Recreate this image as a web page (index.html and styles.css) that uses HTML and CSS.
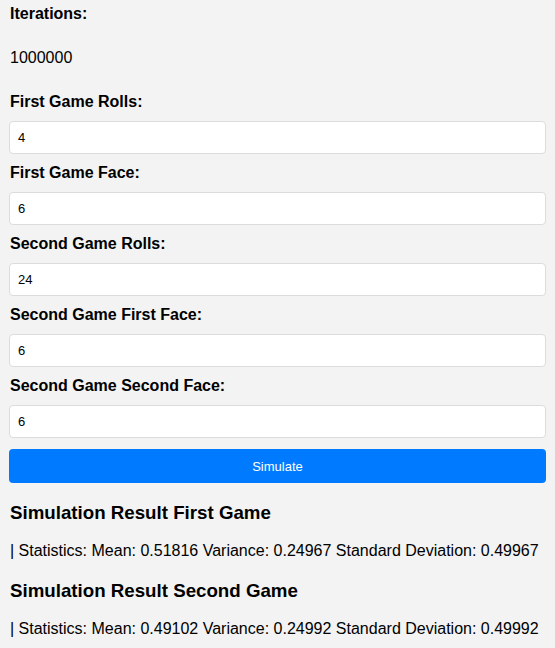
FILE: index.html
```html
<!DOCTYPE html>
<html lang="en">
<head>
<meta charset="utf-8">
<title>Dice Simulation</title>
<link rel="stylesheet" href="styles.css">
</head>
<body>
<div class="app">
  <form class="sim-form">
    <label class="field-label">Iterations:</label>
    <p class="iter-value">1000000</p>
    <label class="field-label" for="r1">First Game Rolls:</label>
    <input class="field-input" id="r1" type="text" value="4">
    <label class="field-label" for="f1">First Game Face:</label>
    <input class="field-input" id="f1" type="text" value="6">
    <label class="field-label" for="r2">Second Game Rolls:</label>
    <input class="field-input" id="r2" type="text" value="24">
    <label class="field-label" for="f2a">Second Game First Face:</label>
    <input class="field-input" id="f2a" type="text" value="6">
    <label class="field-label" for="f2b">Second Game Second Face:</label>
    <input class="field-input" id="f2b" type="text" value="6">
    <button class="sim-button" type="button">Simulate</button>
  </form>
  <div class="results">
    <h3 class="result-title">Simulation Result First Game</h3>
    <p class="result-stats">| Statistics: Mean: 0.51816 Variance: 0.24967 Standard Deviation: 0.49967</p>
    <h3 class="result-title">Simulation Result Second Game</h3>
    <p class="result-stats">| Statistics: Mean: 0.49102 Variance: 0.24992 Standard Deviation: 0.49992</p>
  </div>
</div>
</body>
</html>
```

FILE: styles.css
```css
html, body {
  margin: 0;
  padding: 0;
  background: #f3f3f3;
}

body {
  font-family: "Liberation Sans", Arial, sans-serif;
  color: #000;
}

.app {
  padding: 5px 9px 0;
}

.sim-form {
  display: flex;
  flex-direction: column;
}

.field-label {
  display: block;
  font-size: 16px;
  font-weight: bold;
  margin: 0 0 10px 1px;
}

.iter-value {
  font-size: 16px;
  margin: 16px 0 26px 1px;
}

.field-input {
  box-sizing: border-box;
  width: 100%;
  height: 33px;
  margin: 0 0 10px;
  padding: 0 8px;
  font-family: "Liberation Sans", Arial, sans-serif;
  font-size: 13px;
  color: #000;
  background: #fff;
  border: 1px solid #dcdcdc;
  border-radius: 4px;
  outline: none;
}

.sim-button {
  box-sizing: border-box;
  width: 100%;
  height: 34px;
  margin-top: 1px;
  border: none;
  border-radius: 4px;
  background: #007bff;
  color: #fff;
  font-family: "Liberation Sans", Arial, sans-serif;
  font-size: 13px;
  cursor: pointer;
}

.results {
  display: flex;
  flex-direction: column;
}

.result-title {
  font-size: 18.72px;
  font-weight: bold;
  margin: 19px 0 18px 1px;
}

.result-stats {
  font-size: 16px;
  margin: 0 0 1px 1px;
}
```
